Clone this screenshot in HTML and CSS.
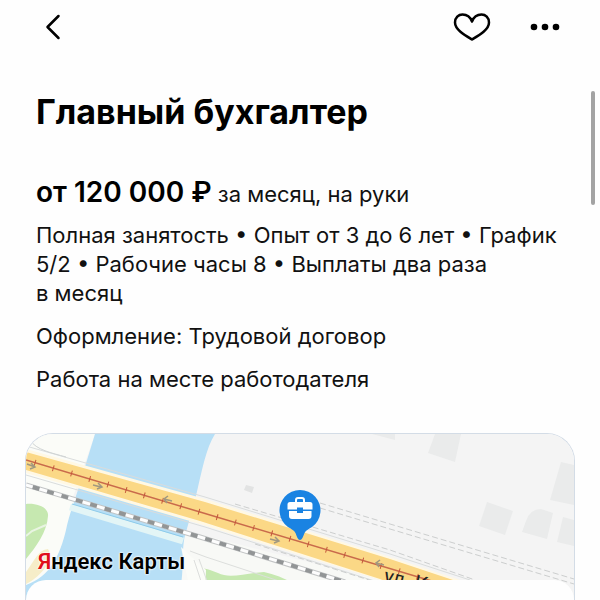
FILE: index.html
```html
<!DOCTYPE html>
<html lang="ru">
<head>
    <meta charset="UTF-8">
    <meta name="viewport" content="width=device-width, initial-scale=1.0">
    <title>Главный бухгалтер</title>
    <link rel="stylesheet" href="styles.css">
</head>
<body>

    <header class="topbar">
        <button class="icon-btn" type="button" aria-label="Назад">
            <svg width="40" height="40" viewBox="0 0 40 40"><path d="M25.500 9 L14.500 20 L25.500 31" /></svg>
        </button>
        <div class="topbar-actions">
            <button class="icon-btn" type="button" aria-label="В избранное">
                <svg width="40" height="40" viewBox="0 0 40 40"><path d="M20 32.500 C12.500 28 3 22.500 3 15.500 C3 10.500 6.500 7.500 10.500 7.500 C15 7.500 18.500 10.500 20 14.500 C21.500 10.500 25 7.500 29.500 7.500 C33.500 7.500 37 10.500 37 15.500 C37 22.500 27.500 28 20 32.500 Z" /></svg>
            </button>
            <button class="icon-btn" type="button" aria-label="Ещё">
                <svg class="dots" width="40" height="40" viewBox="0 0 40 40"><circle cx="9" cy="20" r="3.300" /><circle cx="20" cy="20" r="3.300" /><circle cx="31" cy="20" r="3.300" /></svg>
            </button>
        </div>
    </header>

    <main class="vacancy">
        <div class="info">
            <h1>Главный бухгалтер</h1>
            <p class="salary"><strong>от 120&nbsp;000&nbsp;₽</strong> за месяц, на руки</p>
            <p>Полная занятость • Опыт от 3 до 6 лет • График 5/2 • Рабочие часы 8 • Выплаты два раза в&nbsp;месяц</p>
            <p>Оформление: Трудовой договор</p>
            <p>Работа на месте работодателя</p>
        </div>

        <section class="map-card">
            <div class="map">
                <svg class="map-svg" viewBox="26 434 548 166" preserveAspectRatio="xMidYMin slice">
                    <rect x="26" y="434" width="548" height="166" fill="#f4f4f4" />
                    <!-- left bank -->
                    <path d="M26 434 H95 L72 500 L200 545 L290 600 H26 Z" fill="#fbfcf8" />
                    <path d="M182 530 L300 560 L420 590 V600 H180 Z" fill="#f8f9f6" />
                    <!-- river -->
                    <path d="M95 434 H215 C206 448 202 470 195 500 L186 532 C180 550 186 570 178 600 H26 V585 C50 577 60 555 66 530 C70 510 79 490 84 470 Z" fill="#b7dff6" />
                    <path d="M26 572 C35 560 38 550 48 549 C54 560 42 576 26 584 Z" fill="#f6edc8" />
                    <!-- parks -->
                    <path d="M26 504 C38 503 49 508 48 516 C47 532 36 547 26 559 Z" fill="#c6e8b0" />
                    <path d="M26 536 L32 531 L46 525" fill="none" stroke="#e9f4e2" stroke-width="2" />
                    <path d="M190 577 C192 567 201 567 210 570 L218 573 C230 579 245 573 264 572 C274 574 284 578 295 584 H188 Z" fill="#c6e8b0" />
                    <path d="M181 547 L192 600 H205 L206 570 Z" fill="#fbfcf8" />
                    <!-- buildings -->
                    <g fill="#eaebeb">
                        <path d="M435 434 H461 L455 462 L428 453 Z" />
                        <path d="M561 462 L574 465 V505 L550 500 Z" />
                        <path d="M487 502 L513 511 L505 535 L479 526 Z" />
                        <path d="M526 521 Q530 509 541 509 L553 513 L547 539 L522 532 Z" />
                        <path d="M563 517 L574 520 V546 L557 542 Z" />
                        <path d="M372 434 H395 V440 Z" />
                        <path d="M246 485 L254 487 L252 493 L244 490 Z" fill="#e2e3e3" />
                    </g>
                    <!-- footbridge -->
                    <path d="M70 507 L183 541" stroke="#e3f5f6" stroke-width="7" />
                    <path d="M72 504 L183 537" stroke="#8dcbea" stroke-width="1" />
                    <!-- main road -->
                    <path d="M26 446 L40 450 L205 497 L390 554 L470 580" fill="none" stroke="#d9dcdc" stroke-width="1" />
                    <path d="M30 440 C36 450 52 453 66 457" fill="none" stroke="#cfd3d3" stroke-width="1" />
                    <path d="M26 475 L205 527 L384 584" fill="none" stroke="#d9dcdc" stroke-width="1" />
                    <path d="M26 449 L205 499 L390 557 L460 580 V600 H430 L380 580 L200 524 L26 473 Z" fill="#fff8e4" />
                    <path d="M26 452 L205 502 L390 559 L453 580 V600 H430 L380 579 L200 521 L26 470 Z" fill="#fbd886" />
                    <path d="M26 460 L200 512 L435 582" fill="none" stroke="#c96a4b" stroke-width="1.500" />
                    <path d="M26 460 L200 512 L435 582" fill="none" stroke="#c4573b" stroke-width="6" stroke-dasharray="1 18" stroke-dashoffset="-9" />
                    <g fill="none" stroke="#a09880" stroke-width="1.500">
                        <path d="M27 464 L35 467 M31 463 L35 467 L30 469" />
                        <path d="M93 485 L101 487 M98 483 L102 487 L97 489" />
                        <path d="M172 501 L164 499 M168 496 L164 499 L167 503" />
                        <path d="M270 539 L278 541 M275 537 L279 541 L274 543" />
                        <path d="M384 565 L376 563 M380 560 L376 563 L379 567" />
                    </g>
                    <!-- railway -->
                    <path d="M26 485 L200 537 L345 582" fill="none" stroke="#c2c4c5" stroke-width="5" />
                    <path d="M26 485 L200 537 L345 582" fill="none" stroke="#fdfdfd" stroke-width="3" />
                    <path d="M26 485 L200 537 L345 582" fill="none" stroke="#929596" stroke-width="4" stroke-dasharray="7 8" stroke-dashoffset="-7" />
                    <path d="M190 551 L206 557 L285 583 M199 559 L207 581 M194 560 L201 581" fill="none" stroke="#dcdedc" stroke-width="1" />
                    <!-- dashed paths -->
                    <g fill="none" stroke="#cccece" stroke-width="1" stroke-dasharray="6 3">
                        <path d="M320 503 L390 524 L574 579" />
                        <path d="M320 508 L390 529 L574 584" />
                        <path d="M235 504 L390 550 L475 580" />
                        <path d="M255 544 L385 585" />
                    </g>
                    <text class="street" x="383" y="582" transform="rotate(12 383 582)">ул. К</text>
                    <!-- pin -->
                    <path d="M300 540 C298 540 297 537 295.500 533 C294 530 291 529 288 527 A20.500 20.500 0 1 1 312 527 C309 529 306 530 304.500 533 C303 537 302 540 300 540 Z" fill="#1a83e2" />
                    <rect x="296" y="498" width="8" height="6" rx="2" fill="none" stroke="#fff" stroke-width="2" />
                    <path d="M290 502 H310 Q312.500 502 312.500 504.500 V509.500 H303 V507.500 H297 V509.500 H287.500 V504.500 Q287.500 502 290 502 Z M289 511 H297 V513 H303 V511 H311.500 V516 Q311.500 519 308.500 519 H292 Q289 519 289 516 Z" fill="#fff" />
                </svg>
                <a class="map-logo" href="#"><span>Я</span>ндекс Карты</a>
            </div>
            <div class="map-sheet"></div>
        </section>
    </main>

    <div class="scroll-thumb"></div>

</body>
</html>
```
FILE: styles.css
```css
* {
    box-sizing: border-box;
}

body {
    margin: 0;
    min-height: 100vh;
    display: flex;
    flex-direction: column;
    background: #fefefe;
    color: #111;
    font-family: Inter, "Liberation Sans", sans-serif;
    font-size: 22px;
    line-height: 29px;
}

.topbar {
    display: flex;
    justify-content: space-between;
    padding: 7px 35px 7px 33px;
}

.topbar-actions {
    display: flex;
    gap: 33px;
}

.icon-btn {
    width: 40px;
    height: 40px;
    padding: 0;
    border: none;
    background: none;
    cursor: pointer;
}

.icon-btn svg {
    display: block;
    fill: none;
    stroke: #000;
    stroke-width: 2.5px;
    stroke-linecap: round;
    stroke-linejoin: round;
}

.icon-btn .dots {
    fill: #000;
    stroke: none;
}

.vacancy {
    flex: 1;
    display: flex;
    flex-direction: column;
}

.info {
    padding: 36px 36px 25px;
}

h1 {
    margin: 0 0 40px;
    color: #000;
    font-size: 34px;
    font-weight: 700;
    line-height: 44px;
}

p {
    margin: 0 0 14px;
}

.salary {
    margin-bottom: 9px;
    line-height: 36px;
}

.salary strong {
    color: #000;
    font-size: 28px;
    font-weight: 600;
}

.map-card {
    flex: 1;
    display: flex;
    flex-direction: column;
    margin: 0 25px;
    border: 1px solid #d3dce6;
    border-bottom: none;
    border-radius: 28px 28px 0 0;
    overflow: hidden;
}

.map {
    position: relative;
    height: 166px;
}

.map-svg {
    display: block;
    width: 100%;
    height: 100%;
}

.map-logo {
    position: absolute;
    left: 12px;
    bottom: 24px;
    color: #000;
    font-family: Roboto, sans-serif;
    font-size: 22px;
    font-weight: 600;
    text-decoration: none;
    text-shadow: 0 0 2px #fff, 0 0 2px #fff, 0 0 2px #fff;
}

.map-logo span {
    color: #e0101a;
}

.street {
    fill: #222;
    font-family: Roboto, sans-serif;
    font-size: 20px;
}

.map-sheet {
    position: relative;
    flex: 1;
    min-height: 20px;
    margin-top: -20px;
    border-radius: 24px 24px 0 0;
    background: #fefefe;
}

.scroll-thumb {
    position: fixed;
    top: 91px;
    right: 5px;
    width: 4px;
    height: 114px;
    border-radius: 2px;
    background: #a3a3a3;
}
```
